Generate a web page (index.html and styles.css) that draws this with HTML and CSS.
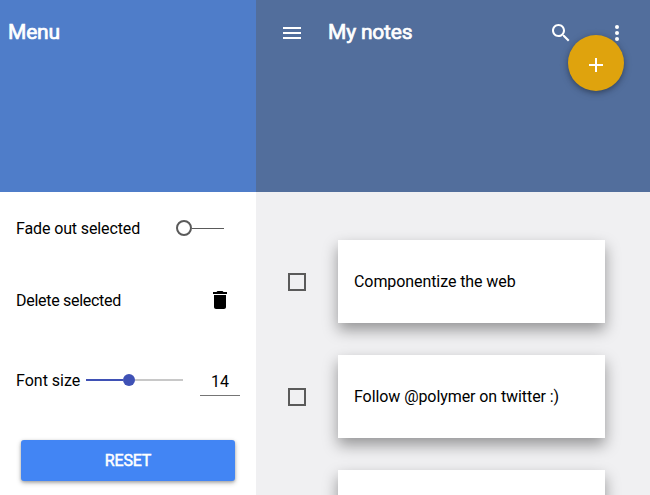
FILE: index.html
```html
<!DOCTYPE html>
<html lang="en">
<head>
<meta charset="utf-8">
<title>My notes</title>
<link rel="stylesheet" href="styles.css">
</head>
<body>
<div class="app">
  <aside class="drawer">
    <header class="drawer-header"><h1 class="title">Menu</h1></header>
    <div class="row row-fade">
      <span class="label label-fade">Fade out selected</span>
      <span class="toggle"><span class="knob"></span><span class="bar"></span></span>
    </div>
    <div class="row row-delete">
      <span class="label label-delete">Delete selected</span>
      <svg class="icon trash" viewBox="0 0 24 24"><path d="M6 19c0 1.100.9 2 2 2h8c1.100 0 2-.9 2-2V7H6v12zM19 4h-3.500l-1-1h-5l-1 1H5v2h14V4z"/></svg>
    </div>
    <div class="row row-size">
      <span class="label label-size">Font size</span>
      <span class="slider"><span class="slider-fill"></span><span class="slider-knob"></span><span class="slider-rest"></span></span>
      <span class="value">14</span>
    </div>
    <button class="reset">RESET</button>
  </aside>
  <main class="main">
    <header class="toolbar">
      <svg class="icon toolbar-icon" viewBox="0 0 24 24"><path d="M3 18h18v-2H3v2zm0-5h18v-2H3v2zm0-7v2h18V6H3z"/></svg>
      <h1 class="title toolbar-title">My notes</h1>
      <svg class="icon toolbar-icon" viewBox="0 0 24 24"><path d="M15.500 14h-.79l-.28-.27C15.410 12.590 16 11.110 16 9.500 16 5.910 13.090 3 9.500 3S3 5.910 3 9.500 5.910 16 9.500 16c1.610 0 3.090-.59 4.230-1.570l.27.28v.79l5 4.990L20.490 19l-4.990-5zm-6 0C7.010 14 5 11.990 5 9.500S7.010 5 9.500 5 14 7.010 14 9.500 11.990 14 9.500 14z"/></svg>
      <svg class="icon toolbar-icon more" viewBox="0 0 24 24"><circle cx="12" cy="6" r="2"/><circle cx="12" cy="12" r="2"/><circle cx="12" cy="18" r="2"/></svg>
      <button class="fab" aria-label="Add note"><svg class="icon" viewBox="0 0 24 24"><path d="M19 13h-6v6h-2v-6H5v-2h6V5h2v6h6v2z"/></svg></button>
    </header>
    <div class="notes">
      <div class="note"><span class="checkbox"></span><div class="card"><span class="note-text">Componentize the web</span></div></div>
      <div class="note"><span class="checkbox"></span><div class="card"><span class="note-text">Follow @polymer on twitter :)</span></div></div>
      <div class="note"><span class="checkbox"></span><div class="card"></div></div>
    </div>
  </main>
</div>
</body>
</html>
```
FILE: styles.css
```css
* { box-sizing: border-box; }
body { margin: 0; font: 16px/24px Roboto, sans-serif; color: #000; }
button { border: 0; padding: 0; font: inherit; color: #fff; }
.app { display: flex; height: 495px; overflow: hidden; }
.icon { display: block; width: 24px; height: 24px; fill: currentColor; flex: none; }
.title { margin: 0; font-size: 21px; line-height: 24px; font-weight: 400; letter-spacing: -.2px; -webkit-text-stroke: .7px currentColor; color: #fff; }
.label, .note-text, .title { white-space: nowrap; }

.drawer { width: 256px; flex: none; background: #fff; }
.drawer-header { height: 192px; padding: 20px 8px; background: #4f7dc9; }
.row { display: flex; align-items: center; padding-left: 16px; }
.row-fade { height: 72px; padding-right: 32px; justify-content: space-between; }
.row-delete { height: 72px; padding-right: 24px; justify-content: space-between; }
.row-size { height: 88px; padding-right: 16px; }
.label { padding-top: 2px; }
.label-fade { letter-spacing: -.12px; }
.label-delete { letter-spacing: -.29px; }
.toggle { display: flex; align-items: center; width: 48px; }
.knob { width: 16px; height: 16px; border: 2px solid #5a5a5a; border-radius: 50%; }
.bar { flex: 1; height: 1px; background: #5a5a5a; }
.slider { display: flex; align-items: center; width: 97px; margin-left: 6px; }
.slider-fill { width: 37px; height: 2px; background: #3f51b5; }
.slider-knob { width: 12px; height: 12px; border-radius: 50%; background: #3f51b5; }
.slider-rest { flex: 1; height: 2px; background: #c8c8c8; }
.label-size { width: 64px; }
.value { width: 40px; height: 28px; margin-left: 17px; margin-top: 4px; padding-top: 2px; border-bottom: 1px solid #757575; text-align: center; }
.reset { display: block; width: 214px; height: 41px; margin: 16px 0 0 21px; border-radius: 3px; background: #4285f4; letter-spacing: -.2px; -webkit-text-stroke: .5px currentColor; box-shadow: 0 2px 5px rgba(0, 0, 0, .26), 0 1px 3px rgba(0, 0, 0, .2); }

.main { flex: 1; background: #f0f0f2; }
.toolbar { position: relative; display: flex; height: 192px; padding: 20px 21px 0 24px; color: #fff; background: #526e9c; }
.toolbar-icon { margin-top: 1px; }
.toolbar-title { margin-left: 24px; flex: 1; }
.more { margin-left: 32px; }
.fab { position: absolute; left: 312px; top: 35px; display: grid; place-items: center; width: 56px; height: 56px; padding-top: 4px; border-radius: 50%; background: #dfa30d; box-shadow: 0 2px 5px rgba(0, 0, 0, .26), 0 2px 10px rgba(0, 0, 0, .16); }
.notes { display: grid; gap: 32px; padding: 48px 45px 0 32px; }
.note { display: flex; align-items: center; height: 83px; }
.checkbox { width: 18px; height: 18px; margin: 0 32px 0 0; border: 2px solid #5a5a5a; }
.card { flex: 1; height: 83px; padding: 30px 16px; background: #fff; box-shadow: 0 7px 14px rgba(0, 0, 0, .38); }
.note-text { letter-spacing: -.08px; }
```
